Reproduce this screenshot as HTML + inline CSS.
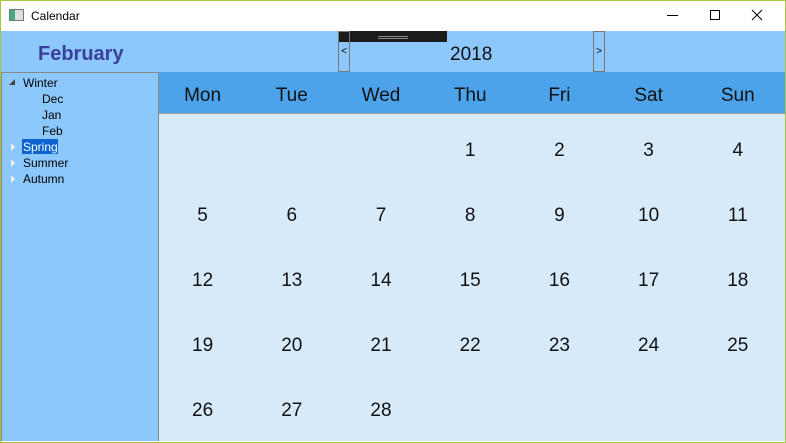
<!DOCTYPE html>
<html><head><style>
*{margin:0;padding:0;box-sizing:border-box}
body{width:786px;height:443px;overflow:hidden;position:relative;background:#fff;font-family:"Segoe UI","Liberation Sans",sans-serif;}
.a{position:absolute}
.cell{position:absolute;width:89.2px;text-align:center;font-size:19px;color:#111}
.hd{position:absolute;top:74px;height:41px;line-height:43px;width:89.2px;text-align:center;font-size:19px;color:#111}
.t{position:absolute;font-size:12px;color:#000;line-height:16px}
.tri{position:absolute;width:0;height:0}
</style></head><body>
<div class="a" style="left:0;top:0;width:786px;height:443px;border:1px solid #a5c73a;border-top:0"></div>
<div class="a" style="left:0;top:0;width:786px;height:1px;background:#a5c73a"></div>
<div class="a" style="left:9px;top:9px;width:15px;height:12px;border:1px solid #777;background:linear-gradient(90deg,#4a8 0 40%,#ddd 40%)"></div>
<div class="t" style="left:31px;top:8px;font-size:12px">Calendar</div>
<div class="a" style="left:667px;top:15px;width:11px;height:1px;background:#000"></div>
<div class="a" style="left:710px;top:10px;width:10px;height:10px;border:1px solid #000"></div>
<svg class="a" style="left:751px;top:9px" width="12" height="12"><path d="M1 1L11 11M11 1L1 11" stroke="#000" stroke-width="1"/></svg>
<div class="a" style="left:1px;top:31px;width:784px;height:41px;background:#8cc8fc"></div>
<div class="a" style="left:38px;top:43px;font-size:20px;font-weight:bold;color:#3a3f9a">February</div>
<div class="a" style="left:339px;top:31px;width:108px;height:11px;background:#1c1c1c"></div>
<div class="a" style="left:378px;top:36px;width:30px;height:1px;background:#888"></div>
<div class="a" style="left:378px;top:38px;width:30px;height:1px;background:#888"></div>
<div class="a" style="left:338px;top:31px;width:12px;height:41px;border:1px solid #777;font-size:10px;line-height:40px;text-align:center">&lt;</div>
<div class="a" style="left:593px;top:31px;width:12px;height:41px;border:1px solid #777;font-size:10px;line-height:40px;text-align:center">&gt;</div>
<div class="a" style="left:450px;top:44px;font-size:19px;color:#111">2018</div>
<div class="a" style="left:1px;top:72px;width:158px;height:369px;background:#8cc8fc;border:1px solid #888;border-bottom:0"></div>
<div class="tri" style="left:9px;top:79px;border-left:6px solid transparent;border-bottom:6px solid #444"></div>
<div class="t" style="left:23px;top:75px">Winter</div>
<div class="t" style="left:42px;top:91px">Dec</div>
<div class="t" style="left:42px;top:107px">Jan</div>
<div class="t" style="left:42px;top:123px">Feb</div>
<div class="a" style="left:22px;top:139px;width:36px;height:15px;background:#0a64d0"></div>
<div class="t" style="left:23px;top:139px;color:#fff">Spring</div>
<div class="t" style="left:23px;top:155px">Summer</div>
<div class="t" style="left:23px;top:171px">Autumn</div>
<div class="tri" style="left:11px;top:143px;border-top:4px solid transparent;border-bottom:4px solid transparent;border-left:4px solid #eee"></div>
<div class="tri" style="left:11px;top:159px;border-top:4px solid transparent;border-bottom:4px solid transparent;border-left:4px solid #eee"></div>
<div class="tri" style="left:11px;top:175px;border-top:4px solid transparent;border-bottom:4px solid transparent;border-left:4px solid #eee"></div>
<div class="a" style="left:159px;top:72px;width:626px;height:41px;background:#4ca3ea"></div>
<div class="a" style="left:159px;top:113px;width:626px;height:1px;background:#999"></div>
<div class="a" style="left:159px;top:114px;width:626px;height:327px;background:#d7eafa"></div>
<div id="g"></div>
<script>
var h=["Mon","Tue","Wed","Thu","Fri","Sat","Sun"],s="";
for(var i=0;i<7;i++)s+='<div class="hd" style="left:'+(158+i*89.2)+'px">'+h[i]+'</div>';
for(var d=1;d<=28;d++){var p=d+2,c=p%7,r=Math.floor(p/7);s+='<div class="cell" style="left:'+(158+c*89.2)+'px;top:'+(140+r*65)+'px">'+d+'</div>';}
document.getElementById('g').innerHTML=s;
</script>
</body></html>
